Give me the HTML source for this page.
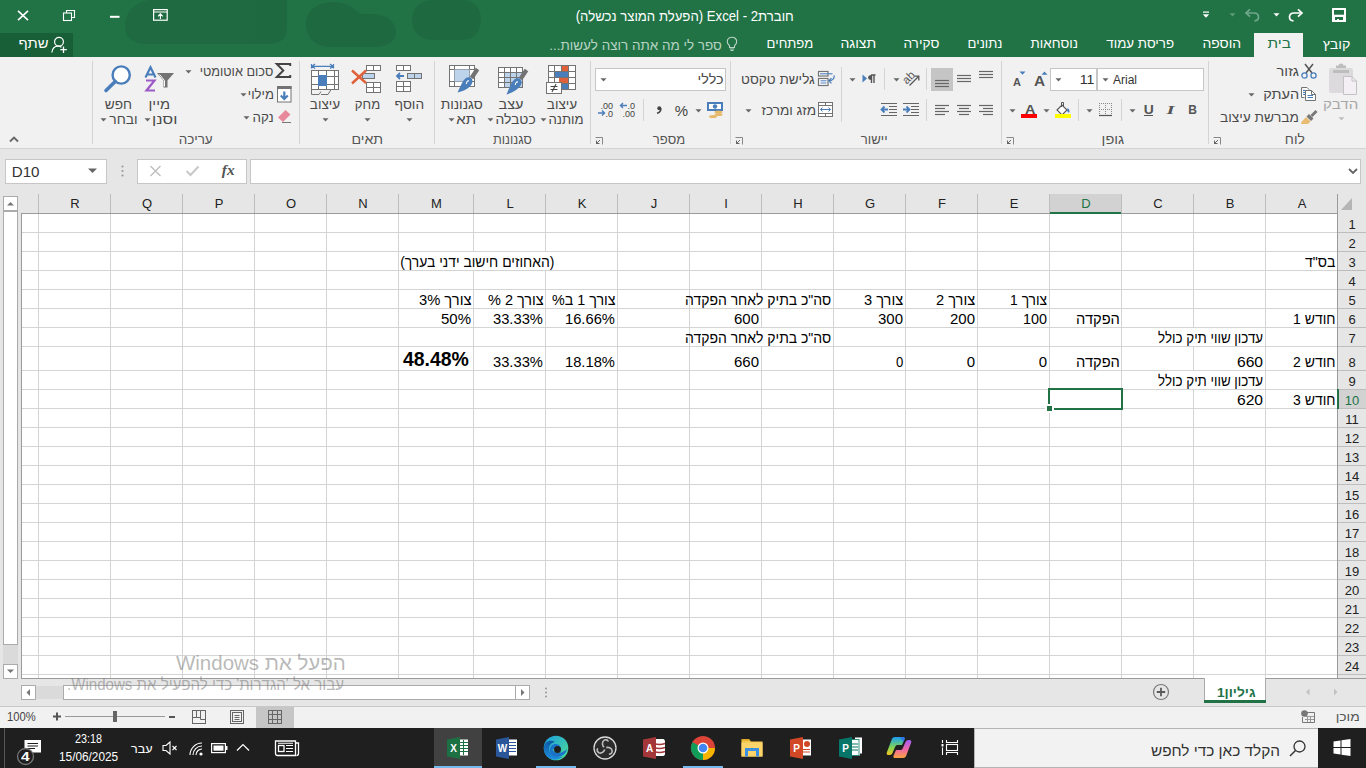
<!DOCTYPE html><html><head><meta charset="utf-8"><style>

*{margin:0;padding:0;box-sizing:border-box}
html,body{width:1366px;height:768px;overflow:hidden;background:#fff}
body{position:relative;font-family:"Liberation Sans",sans-serif;color:#000}
.a{position:absolute}
.ic{position:absolute;overflow:visible;z-index:3}
.t{position:absolute;white-space:nowrap;line-height:1;z-index:4}
.r{direction:rtl}

</style></head><body>
<div class="a" style="left:0;top:0;width:1366px;height:57px;background:#217346"></div>
<div class="a" style="left:0;top:33px;width:73px;height:24px;background:#185e36"></div>
<div class="a" style="left:1254px;top:33px;width:49px;height:24px;background:#f1f1f1"></div>
<div class="a" style="left:0;top:57px;width:1366px;height:92px;background:#f1f1f1;border-bottom:1px solid #d4d4d4"></div>
<div class="a" style="left:92px;top:61px;width:1px;height:83px;background:#d4d4d4"></div>
<div class="a" style="left:299px;top:61px;width:1px;height:83px;background:#d4d4d4"></div>
<div class="a" style="left:434px;top:61px;width:1px;height:83px;background:#d4d4d4"></div>
<div class="a" style="left:590px;top:61px;width:1px;height:83px;background:#d4d4d4"></div>
<div class="a" style="left:730px;top:61px;width:1px;height:83px;background:#d4d4d4"></div>
<div class="a" style="left:1001px;top:61px;width:1px;height:83px;background:#d4d4d4"></div>
<div class="a" style="left:1208px;top:61px;width:1px;height:83px;background:#d4d4d4"></div>
<div class="a" style="left:0;top:149px;width:1366px;height:45px;background:#e6e6e6"></div>
<div class="a" style="left:5px;top:159px;width:102px;height:25px;background:#fff;border:1px solid #c6c6c6"></div>
<div class="a" style="left:137px;top:159px;width:110px;height:25px;background:#fff;border:1px solid #c6c6c6"></div>
<div class="a" style="left:250px;top:159px;width:1111px;height:25px;background:#fff;border:1px solid #c6c6c6"></div>
<div class="a" style="left:0;top:194px;width:1366px;height:485px;background:#e6e6e6"></div>
<div class="a" style="left:1050px;top:194px;width:71px;height:19px;background:#d2d2d2"></div>
<div class="a" style="left:1338px;top:390px;width:28px;height:18px;background:#d2d2d2"></div>
<div class="a" style="left:21px;top:213px;width:1317px;height:466px;background:#fff;border-left:1px solid #9b9b9b;border-top:1px solid #9b9b9b;border-bottom:1px solid #9b9b9b"></div>
<div class="a" style="left:38px;top:194px;width:1px;height:19px;background:#bdbdbd"></div>
<div class="a" style="left:38px;top:214px;width:1px;height:464px;background:#d4d4d4"></div>
<div class="a" style="left:110px;top:194px;width:1px;height:19px;background:#bdbdbd"></div>
<div class="a" style="left:110px;top:214px;width:1px;height:464px;background:#d4d4d4"></div>
<div class="a" style="left:182px;top:194px;width:1px;height:19px;background:#bdbdbd"></div>
<div class="a" style="left:182px;top:214px;width:1px;height:464px;background:#d4d4d4"></div>
<div class="a" style="left:254px;top:194px;width:1px;height:19px;background:#bdbdbd"></div>
<div class="a" style="left:254px;top:214px;width:1px;height:464px;background:#d4d4d4"></div>
<div class="a" style="left:326px;top:194px;width:1px;height:19px;background:#bdbdbd"></div>
<div class="a" style="left:326px;top:214px;width:1px;height:464px;background:#d4d4d4"></div>
<div class="a" style="left:398px;top:194px;width:1px;height:19px;background:#bdbdbd"></div>
<div class="a" style="left:398px;top:214px;width:1px;height:464px;background:#d4d4d4"></div>
<div class="a" style="left:473px;top:194px;width:1px;height:19px;background:#bdbdbd"></div>
<div class="a" style="left:473px;top:214px;width:1px;height:38px;background:#d4d4d4"></div>
<div class="a" style="left:473px;top:271px;width:1px;height:407px;background:#d4d4d4"></div>
<div class="a" style="left:545px;top:194px;width:1px;height:19px;background:#bdbdbd"></div>
<div class="a" style="left:545px;top:214px;width:1px;height:38px;background:#d4d4d4"></div>
<div class="a" style="left:545px;top:271px;width:1px;height:407px;background:#d4d4d4"></div>
<div class="a" style="left:617px;top:194px;width:1px;height:19px;background:#bdbdbd"></div>
<div class="a" style="left:617px;top:214px;width:1px;height:464px;background:#d4d4d4"></div>
<div class="a" style="left:689px;top:194px;width:1px;height:19px;background:#bdbdbd"></div>
<div class="a" style="left:689px;top:214px;width:1px;height:464px;background:#d4d4d4"></div>
<div class="a" style="left:761px;top:194px;width:1px;height:19px;background:#bdbdbd"></div>
<div class="a" style="left:761px;top:214px;width:1px;height:76px;background:#d4d4d4"></div>
<div class="a" style="left:761px;top:309px;width:1px;height:19px;background:#d4d4d4"></div>
<div class="a" style="left:761px;top:347px;width:1px;height:331px;background:#d4d4d4"></div>
<div class="a" style="left:833px;top:194px;width:1px;height:19px;background:#bdbdbd"></div>
<div class="a" style="left:833px;top:214px;width:1px;height:464px;background:#d4d4d4"></div>
<div class="a" style="left:905px;top:194px;width:1px;height:19px;background:#bdbdbd"></div>
<div class="a" style="left:905px;top:214px;width:1px;height:464px;background:#d4d4d4"></div>
<div class="a" style="left:977px;top:194px;width:1px;height:19px;background:#bdbdbd"></div>
<div class="a" style="left:977px;top:214px;width:1px;height:464px;background:#d4d4d4"></div>
<div class="a" style="left:1049px;top:194px;width:1px;height:19px;background:#bdbdbd"></div>
<div class="a" style="left:1049px;top:214px;width:1px;height:464px;background:#d4d4d4"></div>
<div class="a" style="left:1121px;top:194px;width:1px;height:19px;background:#bdbdbd"></div>
<div class="a" style="left:1121px;top:214px;width:1px;height:464px;background:#d4d4d4"></div>
<div class="a" style="left:1193px;top:194px;width:1px;height:19px;background:#bdbdbd"></div>
<div class="a" style="left:1193px;top:214px;width:1px;height:114px;background:#d4d4d4"></div>
<div class="a" style="left:1193px;top:347px;width:1px;height:24px;background:#d4d4d4"></div>
<div class="a" style="left:1193px;top:390px;width:1px;height:288px;background:#d4d4d4"></div>
<div class="a" style="left:1265px;top:194px;width:1px;height:19px;background:#bdbdbd"></div>
<div class="a" style="left:1265px;top:214px;width:1px;height:464px;background:#d4d4d4"></div>
<div class="a" style="left:1337px;top:194px;width:1px;height:484px;background:#9b9b9b"></div>
<div class="a" style="left:1337px;top:678px;width:29px;height:1px;background:#9b9b9b"></div>
<div class="a" style="left:22px;top:232px;width:1315px;height:1px;background:#d4d4d4"></div>
<div class="a" style="left:1338px;top:232px;width:28px;height:1px;background:#bdbdbd"></div>
<div class="a" style="left:22px;top:251px;width:1315px;height:1px;background:#d4d4d4"></div>
<div class="a" style="left:1338px;top:251px;width:28px;height:1px;background:#bdbdbd"></div>
<div class="a" style="left:22px;top:270px;width:1315px;height:1px;background:#d4d4d4"></div>
<div class="a" style="left:1338px;top:270px;width:28px;height:1px;background:#bdbdbd"></div>
<div class="a" style="left:22px;top:289px;width:1315px;height:1px;background:#d4d4d4"></div>
<div class="a" style="left:1338px;top:289px;width:28px;height:1px;background:#bdbdbd"></div>
<div class="a" style="left:22px;top:308px;width:1315px;height:1px;background:#d4d4d4"></div>
<div class="a" style="left:1338px;top:308px;width:28px;height:1px;background:#bdbdbd"></div>
<div class="a" style="left:22px;top:327px;width:1315px;height:1px;background:#d4d4d4"></div>
<div class="a" style="left:1338px;top:327px;width:28px;height:1px;background:#bdbdbd"></div>
<div class="a" style="left:22px;top:346px;width:1315px;height:1px;background:#d4d4d4"></div>
<div class="a" style="left:1338px;top:346px;width:28px;height:1px;background:#bdbdbd"></div>
<div class="a" style="left:22px;top:370px;width:1315px;height:1px;background:#d4d4d4"></div>
<div class="a" style="left:1338px;top:370px;width:28px;height:1px;background:#bdbdbd"></div>
<div class="a" style="left:22px;top:389px;width:1315px;height:1px;background:#d4d4d4"></div>
<div class="a" style="left:1338px;top:389px;width:28px;height:1px;background:#bdbdbd"></div>
<div class="a" style="left:22px;top:408px;width:1315px;height:1px;background:#d4d4d4"></div>
<div class="a" style="left:1338px;top:408px;width:28px;height:1px;background:#bdbdbd"></div>
<div class="a" style="left:22px;top:427px;width:1315px;height:1px;background:#d4d4d4"></div>
<div class="a" style="left:1338px;top:427px;width:28px;height:1px;background:#bdbdbd"></div>
<div class="a" style="left:22px;top:446px;width:1315px;height:1px;background:#d4d4d4"></div>
<div class="a" style="left:1338px;top:446px;width:28px;height:1px;background:#bdbdbd"></div>
<div class="a" style="left:22px;top:465px;width:1315px;height:1px;background:#d4d4d4"></div>
<div class="a" style="left:1338px;top:465px;width:28px;height:1px;background:#bdbdbd"></div>
<div class="a" style="left:22px;top:484px;width:1315px;height:1px;background:#d4d4d4"></div>
<div class="a" style="left:1338px;top:484px;width:28px;height:1px;background:#bdbdbd"></div>
<div class="a" style="left:22px;top:503px;width:1315px;height:1px;background:#d4d4d4"></div>
<div class="a" style="left:1338px;top:503px;width:28px;height:1px;background:#bdbdbd"></div>
<div class="a" style="left:22px;top:522px;width:1315px;height:1px;background:#d4d4d4"></div>
<div class="a" style="left:1338px;top:522px;width:28px;height:1px;background:#bdbdbd"></div>
<div class="a" style="left:22px;top:541px;width:1315px;height:1px;background:#d4d4d4"></div>
<div class="a" style="left:1338px;top:541px;width:28px;height:1px;background:#bdbdbd"></div>
<div class="a" style="left:22px;top:560px;width:1315px;height:1px;background:#d4d4d4"></div>
<div class="a" style="left:1338px;top:560px;width:28px;height:1px;background:#bdbdbd"></div>
<div class="a" style="left:22px;top:579px;width:1315px;height:1px;background:#d4d4d4"></div>
<div class="a" style="left:1338px;top:579px;width:28px;height:1px;background:#bdbdbd"></div>
<div class="a" style="left:22px;top:598px;width:1315px;height:1px;background:#d4d4d4"></div>
<div class="a" style="left:1338px;top:598px;width:28px;height:1px;background:#bdbdbd"></div>
<div class="a" style="left:22px;top:617px;width:1315px;height:1px;background:#d4d4d4"></div>
<div class="a" style="left:1338px;top:617px;width:28px;height:1px;background:#bdbdbd"></div>
<div class="a" style="left:22px;top:636px;width:1315px;height:1px;background:#d4d4d4"></div>
<div class="a" style="left:1338px;top:636px;width:28px;height:1px;background:#bdbdbd"></div>
<div class="a" style="left:22px;top:655px;width:1315px;height:1px;background:#d4d4d4"></div>
<div class="a" style="left:1338px;top:655px;width:28px;height:1px;background:#bdbdbd"></div>
<div class="a" style="left:22px;top:674px;width:1315px;height:1px;background:#d4d4d4"></div>
<div class="a" style="left:1338px;top:674px;width:28px;height:1px;background:#bdbdbd"></div>
<div class="a" style="left:1050px;top:212px;width:71px;height:2px;background:#217346"></div>
<div class="a" style="left:1337px;top:389px;width:2px;height:20px;background:#217346"></div>
<div class="a" style="left:1048px;top:388px;width:75px;height:22px;border:2px solid #217346"></div>
<div class="a" style="left:1045px;top:404px;width:9px;height:9px;background:#fff"></div>
<div class="a" style="left:1047px;top:406px;width:5px;height:5px;background:#217346"></div>
<div class="t r" style="right:572px;top:9px;font-size:14px;color:#fff;transform:scaleX(0.941);transform-origin:100% 50%;">חוברת2 - Excel (הפעלת המוצר נכשלה)</div>
<div class="t r" style="right:16px;top:38px;font-size:13px;color:#fff;transform:scaleX(1.0929);transform-origin:100% 50%;">קובץ</div>
<div class="t r" style="right:125px;top:37px;font-size:13px;color:#fff;transform:scaleX(1.0724);transform-origin:100% 50%;">הוספה</div>
<div class="t r" style="right:192px;top:37px;font-size:13px;color:#fff;transform:scaleX(1.0251);transform-origin:100% 50%;">פריסת עמוד</div>
<div class="t r" style="right:288px;top:37px;font-size:13px;color:#fff;transform:scaleX(1.0309);transform-origin:100% 50%;">נוסחאות</div>
<div class="t r" style="right:364px;top:37px;font-size:13px;color:#fff;transform:scaleX(1.0116);transform-origin:100% 50%;">נתונים</div>
<div class="t r" style="right:427px;top:37px;font-size:13px;color:#fff;transform:scaleX(1.047);transform-origin:100% 50%;">סקירה</div>
<div class="t r" style="right:490px;top:37px;font-size:13px;color:#fff;transform:scaleX(1.0773);transform-origin:100% 50%;">תצוגה</div>
<div class="t r" style="right:553px;top:37px;font-size:13px;color:#fff;transform:scaleX(1.0086);transform-origin:100% 50%;">מפתחים</div>
<div class="t r" style="right:75px;top:37px;font-size:13px;color:#217346;transform:scaleX(1.1756);transform-origin:100% 50%;">בית</div>
<div class="t r" style="right:644px;top:39px;font-size:13px;color:#b9d3c4;transform:scaleX(1.0343);transform-origin:100% 50%;">ספר לי מה אתה רוצה לעשות...</div>
<div class="t r" style="right:1317px;top:37px;font-size:13px;color:#fff;transform:scaleX(1.1342);transform-origin:100% 50%;">שתף</div>
<div class="t r" style="right:1153px;top:133px;font-size:13px;color:#555;transform:scaleX(1.0363);transform-origin:100% 50%;">עריכה</div>
<div class="t r" style="right:983px;top:133px;font-size:13px;color:#555;transform:scaleX(1.0887);transform-origin:100% 50%;">תאים</div>
<div class="t r" style="right:834px;top:133px;font-size:13px;color:#555;transform:scaleX(0.9776);transform-origin:100% 50%;">סגנונות</div>
<div class="t r" style="right:681px;top:133px;font-size:13px;color:#555;transform:scaleX(1.0042);transform-origin:100% 50%;">מספר</div>
<div class="t r" style="right:478px;top:133px;font-size:13px;color:#555;transform:scaleX(1.0108);transform-origin:100% 50%;">יישור</div>
<div class="t r" style="right:242px;top:133px;font-size:13px;color:#555;transform:scaleX(1.1185);transform-origin:100% 50%;">גופן</div>
<div class="t r" style="right:61px;top:133px;font-size:13px;color:#555;transform:scaleX(1.0658);transform-origin:100% 50%;">לוח</div>
<div class="a" style="left:39px;width:72px;text-align:center;top:197px;font-size:13px;line-height:13px;color:#222">R</div>
<div class="a" style="left:111px;width:72px;text-align:center;top:197px;font-size:13px;line-height:13px;color:#222">Q</div>
<div class="a" style="left:183px;width:72px;text-align:center;top:197px;font-size:13px;line-height:13px;color:#222">P</div>
<div class="a" style="left:255px;width:72px;text-align:center;top:197px;font-size:13px;line-height:13px;color:#222">O</div>
<div class="a" style="left:327px;width:72px;text-align:center;top:197px;font-size:13px;line-height:13px;color:#222">N</div>
<div class="a" style="left:399px;width:75px;text-align:center;top:197px;font-size:13px;line-height:13px;color:#222">M</div>
<div class="a" style="left:474px;width:72px;text-align:center;top:197px;font-size:13px;line-height:13px;color:#222">L</div>
<div class="a" style="left:546px;width:72px;text-align:center;top:197px;font-size:13px;line-height:13px;color:#222">K</div>
<div class="a" style="left:618px;width:72px;text-align:center;top:197px;font-size:13px;line-height:13px;color:#222">J</div>
<div class="a" style="left:690px;width:72px;text-align:center;top:197px;font-size:13px;line-height:13px;color:#222">I</div>
<div class="a" style="left:762px;width:72px;text-align:center;top:197px;font-size:13px;line-height:13px;color:#222">H</div>
<div class="a" style="left:834px;width:72px;text-align:center;top:197px;font-size:13px;line-height:13px;color:#222">G</div>
<div class="a" style="left:906px;width:72px;text-align:center;top:197px;font-size:13px;line-height:13px;color:#222">F</div>
<div class="a" style="left:978px;width:72px;text-align:center;top:197px;font-size:13px;line-height:13px;color:#222">E</div>
<div class="a" style="left:1050px;width:72px;text-align:center;top:197px;font-size:13px;line-height:13px;color:#217346">D</div>
<div class="a" style="left:1122px;width:72px;text-align:center;top:197px;font-size:13px;line-height:13px;color:#222">C</div>
<div class="a" style="left:1194px;width:72px;text-align:center;top:197px;font-size:13px;line-height:13px;color:#222">B</div>
<div class="a" style="left:1266px;width:72px;text-align:center;top:197px;font-size:13px;line-height:13px;color:#222">A</div>
<div class="a" style="left:1338px;width:28px;text-align:center;top:218px;font-size:13px;line-height:13px;color:#222">1</div>
<div class="a" style="left:1338px;width:28px;text-align:center;top:237px;font-size:13px;line-height:13px;color:#222">2</div>
<div class="a" style="left:1338px;width:28px;text-align:center;top:256px;font-size:13px;line-height:13px;color:#222">3</div>
<div class="a" style="left:1338px;width:28px;text-align:center;top:275px;font-size:13px;line-height:13px;color:#222">4</div>
<div class="a" style="left:1338px;width:28px;text-align:center;top:294px;font-size:13px;line-height:13px;color:#222">5</div>
<div class="a" style="left:1338px;width:28px;text-align:center;top:313px;font-size:13px;line-height:13px;color:#222">6</div>
<div class="a" style="left:1338px;width:28px;text-align:center;top:332px;font-size:13px;line-height:13px;color:#222">7</div>
<div class="a" style="left:1338px;width:28px;text-align:center;top:356px;font-size:13px;line-height:13px;color:#222">8</div>
<div class="a" style="left:1338px;width:28px;text-align:center;top:375px;font-size:13px;line-height:13px;color:#222">9</div>
<div class="a" style="left:1338px;width:28px;text-align:center;top:394px;font-size:13px;line-height:13px;color:#217346">10</div>
<div class="a" style="left:1338px;width:28px;text-align:center;top:413px;font-size:13px;line-height:13px;color:#222">11</div>
<div class="a" style="left:1338px;width:28px;text-align:center;top:432px;font-size:13px;line-height:13px;color:#222">12</div>
<div class="a" style="left:1338px;width:28px;text-align:center;top:451px;font-size:13px;line-height:13px;color:#222">13</div>
<div class="a" style="left:1338px;width:28px;text-align:center;top:470px;font-size:13px;line-height:13px;color:#222">14</div>
<div class="a" style="left:1338px;width:28px;text-align:center;top:489px;font-size:13px;line-height:13px;color:#222">15</div>
<div class="a" style="left:1338px;width:28px;text-align:center;top:508px;font-size:13px;line-height:13px;color:#222">16</div>
<div class="a" style="left:1338px;width:28px;text-align:center;top:527px;font-size:13px;line-height:13px;color:#222">17</div>
<div class="a" style="left:1338px;width:28px;text-align:center;top:546px;font-size:13px;line-height:13px;color:#222">18</div>
<div class="a" style="left:1338px;width:28px;text-align:center;top:565px;font-size:13px;line-height:13px;color:#222">19</div>
<div class="a" style="left:1338px;width:28px;text-align:center;top:584px;font-size:13px;line-height:13px;color:#222">20</div>
<div class="a" style="left:1338px;width:28px;text-align:center;top:603px;font-size:13px;line-height:13px;color:#222">21</div>
<div class="a" style="left:1338px;width:28px;text-align:center;top:622px;font-size:13px;line-height:13px;color:#222">22</div>
<div class="a" style="left:1338px;width:28px;text-align:center;top:641px;font-size:13px;line-height:13px;color:#222">23</div>
<div class="a" style="left:1338px;width:28px;text-align:center;top:660px;font-size:13px;line-height:13px;color:#222">24</div>
<div class="t r" style="right:31px;top:254px;font-size:15px;color:#000;transform:scaleX(0.9375);transform-origin:100% 50%;">בס"ד</div>
<div class="t r" style="right:812px;top:254px;font-size:15px;color:#000;transform:scaleX(0.9268);transform-origin:100% 50%;">(האחוזים חישוב ידני בערך)</div>
<div class="t r" style="right:319px;top:292px;font-size:15px;color:#000;transform:scaleX(0.9231);transform-origin:100% 50%;">צורך 1</div>
<div class="t r" style="right:391px;top:292px;font-size:15px;color:#000;transform:scaleX(0.9757);transform-origin:100% 50%;">צורך 2</div>
<div class="t r" style="right:463px;top:292px;font-size:15px;color:#000;transform:scaleX(0.9757);transform-origin:100% 50%;">צורך 3</div>
<div class="t r" style="right:535px;top:292px;font-size:15px;color:#000;transform:scaleX(0.9295);transform-origin:100% 50%;">סה"כ בתיק לאחר הפקדה</div>
<div class="t r" style="right:750px;top:292px;font-size:15px;color:#000;transform:scaleX(0.9545);transform-origin:100% 50%;">צורך 1 ב%</div>
<div class="t r" style="right:822px;top:292px;font-size:15px;color:#000;transform:scaleX(0.9649);transform-origin:100% 50%;">צורך 2 %</div>
<div class="t r" style="right:894px;top:292px;font-size:15px;color:#000;transform:scaleX(0.9815);transform-origin:100% 50%;">צורך 3%</div>
<div class="t r" style="right:30px;top:311px;font-size:15px;color:#000;transform:scaleX(0.9318);transform-origin:100% 50%;">חודש 1</div>
<div class="t r" style="right:246px;top:311px;font-size:15px;color:#000;transform:scaleX(0.9767);transform-origin:100% 50%;">הפקדה</div>
<div class="t" style="right:319px;top:311px;font-size:15px;color:#000;transform:scaleX(0.9583);transform-origin:100% 50%;">100</div>
<div class="t" style="right:391px;top:311px;font-size:15px;color:#000;">200</div>
<div class="t" style="right:463px;top:311px;font-size:15px;color:#000;">300</div>
<div class="t" style="right:607px;top:311px;font-size:15px;color:#000;">600</div>
<div class="t" style="right:751px;top:311px;font-size:15px;color:#000;transform:scaleX(0.98);transform-origin:100% 50%;">16.66%</div>
<div class="t" style="right:823px;top:311px;font-size:15px;color:#000;transform:scaleX(0.98);transform-origin:100% 50%;">33.33%</div>
<div class="t" style="right:895px;top:311px;font-size:15px;color:#000;">50%</div>
<div class="t r" style="right:103px;top:330px;font-size:15px;color:#000;transform:scaleX(0.8889);transform-origin:100% 50%;">עדכון שווי תיק כולל</div>
<div class="t r" style="right:535px;top:330px;font-size:15px;color:#000;transform:scaleX(0.9295);transform-origin:100% 50%;">סה"כ בתיק לאחר הפקדה</div>
<div class="t r" style="right:30px;top:354px;font-size:15px;color:#000;transform:scaleX(0.9318);transform-origin:100% 50%;">חודש 2</div>
<div class="t" style="right:103px;top:354px;font-size:15px;color:#000;transform:scaleX(1.0417);transform-origin:100% 50%;">660</div>
<div class="t r" style="right:246px;top:354px;font-size:15px;color:#000;transform:scaleX(0.9767);transform-origin:100% 50%;">הפקדה</div>
<div class="t" style="right:319px;top:354px;font-size:15px;color:#000;">0</div>
<div class="t" style="right:391px;top:354px;font-size:15px;color:#000;">0</div>
<div class="t" style="right:463px;top:354px;font-size:15px;color:#000;transform:scaleX(0.875);transform-origin:100% 50%;">0</div>
<div class="t" style="right:607px;top:354px;font-size:15px;color:#000;">660</div>
<div class="t" style="right:751px;top:354px;font-size:15px;color:#000;transform:scaleX(0.98);transform-origin:100% 50%;">18.18%</div>
<div class="t" style="right:823px;top:354px;font-size:15px;color:#000;transform:scaleX(0.98);transform-origin:100% 50%;">33.33%</div>
<div class="t" style="right:897px;top:349px;font-size:20px;color:#000;font-weight:bold;transform:scaleX(0.9723);transform-origin:100% 50%;">48.48%</div>
<div class="t r" style="right:103px;top:373px;font-size:15px;color:#000;transform:scaleX(0.8889);transform-origin:100% 50%;">עדכון שווי תיק כולל</div>
<div class="t r" style="right:30px;top:392px;font-size:15px;color:#000;transform:scaleX(0.9318);transform-origin:100% 50%;">חודש 3</div>
<div class="t" style="right:103px;top:392px;font-size:15px;color:#000;transform:scaleX(1.0417);transform-origin:100% 50%;">620</div>
<div class="a" style="left:3px;top:196px;width:15px;height:15px;background:#fff;border:1px solid #ababab"></div>
<svg class="ic" style="left:3px;top:196px" width="15" height="15"><path d="M4 9.5 L7.5 6 L11 9.5Z" fill="#777"/></svg>
<div class="a" style="left:3px;top:211px;width:15px;height:434px;background:#fff;border:1px solid #ababab"></div>
<div class="a" style="left:3px;top:645px;width:15px;height:19px;background:#dadada"></div>
<div class="a" style="left:3px;top:664px;width:15px;height:15px;background:#fff;border:1px solid #ababab"></div>
<svg class="ic" style="left:3px;top:664px" width="15" height="15"><path d="M4 5.5 L7.5 9 L11 5.5Z" fill="#777"/></svg>
<div class="a" style="left:0;top:679px;width:1366px;height:27px;background:#e6e6e6"></div>
<div class="a" style="left:21px;top:685px;width:15px;height:15px;background:#fff;border:1px solid #ababab"></div>
<svg class="ic" style="left:21px;top:685px" width="15" height="15"><path d="M9 4 L5.5 7.5 L9 11Z" fill="#777"/></svg>
<div class="a" style="left:36px;top:686px;width:27px;height:13px;background:#dadada"></div>
<div class="a" style="left:63px;top:685px;width:453px;height:15px;background:#fff;border:1px solid #ababab"></div>
<div class="a" style="left:515px;top:685px;width:15px;height:15px;background:#fff;border:1px solid #ababab"></div>
<svg class="ic" style="left:515px;top:685px" width="15" height="15"><path d="M6 4 L9.5 7.5 L6 11Z" fill="#777"/></svg>
<svg class="ic" style="left:544px;top:686px" width="5" height="14"><circle cx="2" cy="2.5" r="1" fill="#999"/><circle cx="2" cy="6.5" r="1" fill="#999"/><circle cx="2" cy="10.5" r="1" fill="#999"/></svg>
<div class="a" style="left:1204px;top:678px;width:62px;height:25px;background:#fff;border-left:1px solid #ababab;border-right:1px solid #ababab"></div>
<div class="a" style="left:1204px;top:700px;width:62px;height:3px;background:#217346"></div>
<svg class="ic" style="left:1150px;top:681px" width="22" height="22"><circle cx="11" cy="11" r="7.5" fill="none" stroke="#7a7a7a" stroke-width="1.2"/><path d="M11 6.8V15.2M6.8 11H15.2" stroke="#5a5a5a" stroke-width="1.8"/></svg>
<svg class="ic" style="left:1300px;top:684px" width="44" height="16"><path d="M9.5 4.5 L6 8 L9.5 11.5Z" fill="#c2c2c2"/><path d="M34 4.5 L37.5 8 L34 11.5Z" fill="#c2c2c2"/></svg>
<div class="t r" style="right:110px;top:686px;font-size:13px;color:#217346;font-weight:bold;transform:scaleX(1.0564);transform-origin:100% 50%;">גיליון1</div>
<div class="a" style="left:0;top:706px;width:1366px;height:22px;background:#f1f1f1;border-top:1px solid #c8c8c8"></div>
<div class="a" style="left:256px;top:707px;width:38px;height:21px;background:#c6c6c6"></div>
<div class="t" style="right:1330px;top:711px;font-size:12px;color:#444;transform:scaleX(0.9333);transform-origin:100% 50%;">100%</div>
<svg class="ic" style="left:50px;top:708px" width="130" height="18"><path d="M3 8.5H11M7 4.5V12.5" stroke="#555" stroke-width="2"/><path d="M15 8.5H115" stroke="#9a9a9a" stroke-width="1"/><rect x="63" y="3" width="4" height="11" fill="#666"/><path d="M119 9H125" stroke="#555" stroke-width="2"/></svg>
<svg class="ic" style="left:192px;top:710px" width="14" height="14"><rect x="0.5" y="0.5" width="13" height="13" fill="none" stroke="#666"/><path d="M4.5 0.5V7.5M8.5 0.5V9.5H13.5M0.5 7.5H8.5" fill="none" stroke="#666"/></svg>
<svg class="ic" style="left:230px;top:710px" width="14" height="14"><rect x="0.5" y="0.5" width="13" height="13" fill="none" stroke="#666"/><rect x="2.5" y="2.5" width="9" height="9" fill="none" stroke="#666"/><path d="M4.5 5.5H9.5M4.5 7.5H9.5M4.5 9.5H9.5" stroke="#666"/></svg>
<svg class="ic" style="left:268px;top:710px" width="14" height="14"><rect x="0.5" y="0.5" width="13" height="13" fill="none" stroke="#666"/><path d="M4.5 0.5V13.5M9.5 0.5V13.5M0.5 4.5H13.5M0.5 9.5H13.5" stroke="#666"/></svg>
<div class="t r" style="right:6px;top:711px;font-size:12px;color:#555;transform:scaleX(1.1579);transform-origin:100% 50%;">מוכן</div>
<svg class="ic" style="left:1301px;top:710px" width="14" height="13"><circle cx="3.5" cy="3.5" r="3.3" fill="#777"/><path d="M5 2.5H13.5V12.5H1.5V7" fill="none" stroke="#777"/><path d="M4 6.5H13M4 9.5H13M6.5 6V12M9.5 6V12" stroke="#999"/></svg>
<div class="a" style="left:0;top:728px;width:1366px;height:40px;background:#1f1f20"></div>
<div class="a" style="left:4px;top:728px;width:1px;height:40px;background:#555"></div>
<div class="a" style="left:434px;top:728px;width:48px;height:40px;background:#414141"></div>
<div class="a" style="left:434px;top:766px;width:48px;height:2px;background:#76b9ed"></div>
<div class="a" style="left:536px;top:766px;width:40px;height:2px;background:#76b9ed"></div>
<div class="a" style="left:683px;top:766px;width:40px;height:2px;background:#76b9ed"></div>
<div class="a" style="left:974px;top:728px;width:344px;height:40px;background:#f2f2f2;border:1px solid #b4b4b4;border-right:none"></div>
<div class="t" style="right:1264px;top:733px;font-size:12px;color:#fff;transform:scaleX(0.9);transform-origin:100% 50%;">23:18</div>
<div class="t" style="right:1248px;top:751px;font-size:12px;color:#fff;transform:scaleX(0.9831);transform-origin:100% 50%;">15/06/2025</div>
<div class="t r" style="right:1213px;top:743px;font-size:12px;color:#fff;transform:scaleX(1.05);transform-origin:100% 50%;">עבר</div>
<div class="t r" style="right:86px;top:743px;font-size:15px;color:#333;transform:scaleX(1.024);transform-origin:100% 50%;">הקלד כאן כדי לחפש</div>
<div class="t r" style="right:1234px;top:98px;font-size:13px;color:#4a4a4a;transform:scaleX(1.0497);transform-origin:100% 50%;">חפש</div>
<div class="t r" style="right:1228px;top:113px;font-size:13px;color:#4a4a4a;transform:scaleX(1.0617);transform-origin:100% 50%;">ובחר</div>
<div class="t r" style="right:1196px;top:98px;font-size:13px;color:#4a4a4a;transform:scaleX(1.1281);transform-origin:100% 50%;">מיין</div>
<div class="t r" style="right:1189px;top:113px;font-size:13px;color:#4a4a4a;transform:scaleX(1.247);transform-origin:100% 50%;">וסנן</div>
<div class="t r" style="right:1093px;top:65px;font-size:13px;color:#4a4a4a;transform:scaleX(0.9774);transform-origin:100% 50%;">סכום אוטומטי</div>
<div class="t r" style="right:1092px;top:88px;font-size:13px;color:#4a4a4a;transform:scaleX(1.007);transform-origin:100% 50%;">מילוי</div>
<div class="t r" style="right:1092px;top:111px;font-size:13px;color:#4a4a4a;transform:scaleX(1.0257);transform-origin:100% 50%;">נקה</div>
<div class="t r" style="right:1026px;top:98px;font-size:13px;color:#4a4a4a;transform:scaleX(1.0417);transform-origin:100% 50%;">עיצוב</div>
<div class="t r" style="right:986px;top:98px;font-size:13px;color:#4a4a4a;transform:scaleX(1.0087);transform-origin:100% 50%;">מחק</div>
<div class="t r" style="right:942px;top:98px;font-size:13px;color:#4a4a4a;transform:scaleX(1.0538);transform-origin:100% 50%;">הוסף</div>
<div class="t r" style="right:883px;top:98px;font-size:13px;color:#4a4a4a;transform:scaleX(1.0584);transform-origin:100% 50%;">סגנונות</div>
<div class="t r" style="right:890px;top:113px;font-size:13px;color:#4a4a4a;transform:scaleX(1.1539);transform-origin:100% 50%;">תא</div>
<div class="t r" style="right:843px;top:98px;font-size:13px;color:#4a4a4a;transform:scaleX(1.1077);transform-origin:100% 50%;">עצב</div>
<div class="t r" style="right:830px;top:113px;font-size:13px;color:#4a4a4a;transform:scaleX(1.0678);transform-origin:100% 50%;">כטבלה</div>
<div class="t r" style="right:789px;top:98px;font-size:13px;color:#4a4a4a;transform:scaleX(1.0417);transform-origin:100% 50%;">עיצוב</div>
<div class="t r" style="right:782px;top:113px;font-size:13px;color:#4a4a4a;transform:scaleX(1.014);transform-origin:100% 50%;">מותנה</div>
<div class="t r" style="right:642px;top:73px;font-size:13px;color:#4a4a4a;transform:scaleX(1.1009);transform-origin:100% 50%;">כללי</div>
<div class="t r" style="right:551px;top:73px;font-size:13px;color:#4a4a4a;transform:scaleX(1.0408);transform-origin:100% 50%;">גלישת טקסט</div>
<div class="t r" style="right:550px;top:104px;font-size:13px;color:#4a4a4a;transform:scaleX(1.0486);transform-origin:100% 50%;">מזג ומרכז</div>
<div class="t r" style="right:67px;top:65px;font-size:13px;color:#4a4a4a;transform:scaleX(1.1204);transform-origin:100% 50%;">גזור</div>
<div class="t r" style="right:67px;top:88px;font-size:13px;color:#4a4a4a;transform:scaleX(1.1141);transform-origin:100% 50%;">העתק</div>
<div class="t r" style="right:67px;top:111px;font-size:13px;color:#4a4a4a;transform:scaleX(1.0526);transform-origin:100% 50%;">מברשת עיצוב</div>
<div class="t r" style="right:8px;top:98px;font-size:13px;color:#a6a6a6;transform:scaleX(1.1615);transform-origin:100% 50%;">הדבק</div>
<div class="t" style="right:229px;top:74px;font-size:12px;color:#333;">Arial</div>
<div class="t" style="right:272px;top:74px;font-size:12px;color:#333;transform:scaleX(1.1736);transform-origin:100% 50%;">11</div>
<div class="a" style="left:595px;top:68px;width:131px;height:23px;background:#fff;border:1px solid #c6c6c6"></div>
<div class="a" style="left:1050px;top:68px;width:47px;height:23px;background:#fff;border:1px solid #c6c6c6"></div>
<div class="a" style="left:1097px;top:68px;width:107px;height:23px;background:#fff;border:1px solid #c6c6c6"></div>
<svg class="ic" style="left:185px;top:70px" width="7" height="4" viewBox="0 0 7 4"><path d="M0.5 0.2H6.5L3.5 3.6Z" fill="#666"/></svg>
<svg class="ic" style="left:240px;top:93px" width="7" height="4" viewBox="0 0 7 4"><path d="M0.5 0.2H6.5L3.5 3.6Z" fill="#666"/></svg>
<svg class="ic" style="left:243px;top:116px" width="7" height="4" viewBox="0 0 7 4"><path d="M0.5 0.2H6.5L3.5 3.6Z" fill="#666"/></svg>
<svg class="ic" style="left:100px;top:118px" width="7" height="4" viewBox="0 0 7 4"><path d="M0.5 0.2H6.5L3.5 3.6Z" fill="#666"/></svg>
<svg class="ic" style="left:144px;top:118px" width="7" height="4" viewBox="0 0 7 4"><path d="M0.5 0.2H6.5L3.5 3.6Z" fill="#666"/></svg>
<svg class="ic" style="left:322px;top:118px" width="7" height="4" viewBox="0 0 7 4"><path d="M0.5 0.2H6.5L3.5 3.6Z" fill="#666"/></svg>
<svg class="ic" style="left:364px;top:118px" width="7" height="4" viewBox="0 0 7 4"><path d="M0.5 0.2H6.5L3.5 3.6Z" fill="#666"/></svg>
<svg class="ic" style="left:406px;top:118px" width="7" height="4" viewBox="0 0 7 4"><path d="M0.5 0.2H6.5L3.5 3.6Z" fill="#666"/></svg>
<svg class="ic" style="left:448px;top:118px" width="7" height="4" viewBox="0 0 7 4"><path d="M0.5 0.2H6.5L3.5 3.6Z" fill="#666"/></svg>
<svg class="ic" style="left:487px;top:118px" width="7" height="4" viewBox="0 0 7 4"><path d="M0.5 0.2H6.5L3.5 3.6Z" fill="#666"/></svg>
<svg class="ic" style="left:540px;top:118px" width="7" height="4" viewBox="0 0 7 4"><path d="M0.5 0.2H6.5L3.5 3.6Z" fill="#666"/></svg>
<svg class="ic" style="left:600px;top:78px" width="7" height="4" viewBox="0 0 7 4"><path d="M0.5 0.2H6.5L3.5 3.6Z" fill="#666"/></svg>
<svg class="ic" style="left:695px;top:109px" width="7" height="4" viewBox="0 0 7 4"><path d="M0.5 0.2H6.5L3.5 3.6Z" fill="#666"/></svg>
<svg class="ic" style="left:745px;top:109px" width="7" height="4" viewBox="0 0 7 4"><path d="M0.5 0.2H6.5L3.5 3.6Z" fill="#666"/></svg>
<svg class="ic" style="left:849px;top:78px" width="7" height="4" viewBox="0 0 7 4"><path d="M0.5 0.2H6.5L3.5 3.6Z" fill="#666"/></svg>
<svg class="ic" style="left:893px;top:78px" width="7" height="4" viewBox="0 0 7 4"><path d="M0.5 0.2H6.5L3.5 3.6Z" fill="#666"/></svg>
<svg class="ic" style="left:1009px;top:109px" width="7" height="4" viewBox="0 0 7 4"><path d="M0.5 0.2H6.5L3.5 3.6Z" fill="#666"/></svg>
<svg class="ic" style="left:1043px;top:109px" width="7" height="4" viewBox="0 0 7 4"><path d="M0.5 0.2H6.5L3.5 3.6Z" fill="#666"/></svg>
<svg class="ic" style="left:1086px;top:109px" width="7" height="4" viewBox="0 0 7 4"><path d="M0.5 0.2H6.5L3.5 3.6Z" fill="#666"/></svg>
<svg class="ic" style="left:1129px;top:109px" width="7" height="4" viewBox="0 0 7 4"><path d="M0.5 0.2H6.5L3.5 3.6Z" fill="#666"/></svg>
<svg class="ic" style="left:1055px;top:78px" width="7" height="4" viewBox="0 0 7 4"><path d="M0.5 0.2H6.5L3.5 3.6Z" fill="#666"/></svg>
<svg class="ic" style="left:1102px;top:78px" width="7" height="4" viewBox="0 0 7 4"><path d="M0.5 0.2H6.5L3.5 3.6Z" fill="#666"/></svg>
<svg class="ic" style="left:1248px;top:93px" width="7" height="4" viewBox="0 0 7 4"><path d="M0.5 0.2H6.5L3.5 3.6Z" fill="#666"/></svg>
<svg class="ic" style="left:1338px;top:117px" width="7" height="4" viewBox="0 0 7 4"><path d="M0.5 0.2H6.5L3.5 3.6Z" fill="#bdbdbd"/></svg>
<div class="a" style="left:643px;top:99px;width:1px;height:22px;background:#d4d4d4"></div>
<div class="a" style="left:841px;top:67px;width:1px;height:55px;background:#d4d4d4"></div>
<div class="a" style="left:884px;top:68px;width:1px;height:22px;background:#d4d4d4"></div>
<div class="a" style="left:926px;top:68px;width:1px;height:22px;background:#d4d4d4"></div>
<div class="a" style="left:926px;top:99px;width:1px;height:22px;background:#d4d4d4"></div>
<div class="a" style="left:1078px;top:99px;width:1px;height:22px;background:#d4d4d4"></div>
<div class="a" style="left:1121px;top:99px;width:1px;height:22px;background:#d4d4d4"></div>
<svg class="ic" style="left:595px;top:137px" width="8" height="8" viewBox="0 0 8 8"><path d="M0.5 0.5H7.5V7.5" fill="none" stroke="#888"/><path d="M1 7L5 3M1.5 3.5V6.5H4.5" fill="none" stroke="#666"/></svg>
<svg class="ic" style="left:735px;top:137px" width="8" height="8" viewBox="0 0 8 8"><path d="M0.5 0.5H7.5V7.5" fill="none" stroke="#888"/><path d="M1 7L5 3M1.5 3.5V6.5H4.5" fill="none" stroke="#666"/></svg>
<svg class="ic" style="left:1006px;top:137px" width="8" height="8" viewBox="0 0 8 8"><path d="M0.5 0.5H7.5V7.5" fill="none" stroke="#888"/><path d="M1 7L5 3M1.5 3.5V6.5H4.5" fill="none" stroke="#666"/></svg>
<svg class="ic" style="left:1213px;top:137px" width="8" height="8" viewBox="0 0 8 8"><path d="M0.5 0.5H7.5V7.5" fill="none" stroke="#888"/><path d="M1 7L5 3M1.5 3.5V6.5H4.5" fill="none" stroke="#666"/></svg>
<svg class="ic" style="left:9px;top:136px" width="10" height="7" viewBox="0 0 10 7"><path d="M1 5.5L5 1.5L9 5.5" fill="none" stroke="#666" stroke-width="1.8"/></svg>
<svg class="ic" style="left:103px;top:64px" width="30" height="30" viewBox="0 0 30 30"><circle cx="18.2" cy="11" r="8.6" fill="#fff" stroke="#4a7ebb" stroke-width="2.4"/><path d="M12.2 17.5L3 26.5" stroke="#4a7ebb" stroke-width="3.6" stroke-linecap="round"/></svg>
<svg class="ic" style="left:144px;top:65px" width="32" height="29" viewBox="0 0 32 29"><path d="M1.5 12.5L6.5 2.2L11.5 12.5M3.3 9.5H9.7" fill="none" stroke="#4a7ebb" stroke-width="2.2"/><path d="M2 15.5H10.5L2.5 25.5H11" fill="none" stroke="#9c5ac6" stroke-width="2.2"/><path d="M13 8H30L23.5 15.5V22.5H19.5V15.5Z" fill="#737373"/><path d="M15.5 9.5L20.5 15.5V21.5" fill="none" stroke="#fff" stroke-width="1"/></svg>
<svg class="ic" style="left:275px;top:62px" width="17" height="17" viewBox="0 0 17 17"><path d="M15.2 4V2H1.8L8.3 8.5L1.8 15H15.2V13" fill="none" stroke="#444" stroke-width="2" stroke-linejoin="miter"/></svg>
<svg class="ic" style="left:276px;top:85px" width="16" height="18" viewBox="0 0 16 18"><rect x="1.5" y="1.5" width="13.5" height="15.5" fill="#fff" stroke="#737373"/><rect x="1" y="1" width="14.5" height="3" fill="#737373"/><path d="M8.3 6.5V14M4.8 10.5L8.3 14L11.8 10.5" fill="none" stroke="#4a7ebb" stroke-width="2.2"/></svg>
<svg class="ic" style="left:276px;top:109px" width="16" height="15" viewBox="0 0 16 15"><path d="M9.5 1L14.5 5.5L7 13L2 8.5Z" fill="#e8899b"/><path d="M6 13.5H15" stroke="#777" stroke-width="1"/></svg>
<svg class="ic" style="left:310px;top:63px" width="30" height="33" viewBox="0 0 30 33"><path d="M1.5 1V5.5M23.5 1V5.5M2 3.3H23M5 1L2 3.3L5 5.6M20 1L23 3.3L20 5.6" fill="none" stroke="#4a7ebb" stroke-width="1.2"/><rect x="1.5" y="7.5" width="27" height="19" fill="#fff" stroke="#737373"/><path d="M8.5 7.5V26.5M16.5 7.5V26.5M24.5 7.5V26.5M1.5 13.5H28.5M1.5 21.5H28.5" stroke="#737373"/><rect x="8" y="12" width="9" height="11" fill="#4a7ebb"/><path d="M1.5 26.5V31.5H9L11 28.5M11 31.5H18L21 26.5" fill="none" stroke="#737373"/></svg>
<svg class="ic" style="left:350px;top:64px" width="33" height="30" viewBox="0 0 33 30"><rect x="16.5" y="1.5" width="14" height="5" fill="#fff" stroke="#737373"/><path d="M23.5 1.5V6.5" stroke="#737373"/><rect x="12.5" y="9.5" width="12" height="5" fill="#bcd3eb" stroke="#737373"/><rect x="16.5" y="18.5" width="14" height="10" fill="#fff" stroke="#737373"/><path d="M23.5 18.5V28.5M16.5 23.5H30.5" stroke="#737373"/><path d="M2 6.5L16 19M2 19.5L16 6.5" stroke="#e0603a" stroke-width="2.4"/></svg>
<svg class="ic" style="left:395px;top:64px" width="28" height="30" viewBox="0 0 28 30"><rect x="1.5" y="1.5" width="14" height="5" fill="#fff" stroke="#737373"/><path d="M8.5 1.5V6.5" stroke="#737373"/><rect x="12.5" y="9.5" width="14" height="5" fill="#bcd3eb" stroke="#737373"/><path d="M19.5 9.5V14.5" stroke="#737373"/><path d="M2.5 12H9M5 9L2 12L5 15" fill="none" stroke="#4a7ebb" stroke-width="1.8"/><rect x="1.5" y="17.5" width="14" height="10" fill="#fff" stroke="#737373"/><path d="M8.5 17.5V27.5M1.5 22.5H15.5" stroke="#737373"/></svg>
<svg class="ic" style="left:448px;top:64px" width="32" height="31" viewBox="0 0 32 31"><rect x="1.5" y="1.5" width="25" height="21" fill="#fff" stroke="#737373"/><path d="M6.5 1.5V22.5M21.5 1.5V22.5M1.5 5.5H26.5M1.5 17.5H26.5" stroke="#737373"/><rect x="6.5" y="5.5" width="15" height="12" fill="#bcd3eb"/><path d="M29.5 5L23.5 14" stroke="#737373" stroke-width="4.2"/><path d="M22.5 13.5C25.5 15.5 25 19.5 22 22.5C19 25.5 14.5 27.5 9.5 28.5C11.5 24.5 13.5 19.5 15.5 16.5C17.5 13.5 20 12.5 22.5 13.5Z" fill="#4a7ebb"/><path d="M21 17C19.5 16.5 18 18.5 18.5 20" stroke="#fff" stroke-width="1.1" fill="none"/></svg>
<svg class="ic" style="left:497px;top:66px" width="32" height="30" viewBox="0 0 32 30"><rect x="1.5" y="1.5" width="24" height="20" fill="#fff" stroke="#737373"/><rect x="7" y="6" width="18" height="15" fill="#bcd3eb"/><path d="M7.5 1.5V21.5M13.5 1.5V21.5M19.5 1.5V21.5M1.5 6.5H25.5M1.5 11.5H25.5M1.5 16.5H25.5" stroke="#737373"/><path d="M29.5 4L23.5 13" stroke="#737373" stroke-width="4.2"/><path d="M22.5 12.5C25.5 14.5 25 18.5 22 21.5C19 24.5 14.5 27 9.5 28.5C11.5 24 13.5 18.5 15.5 15.5C17.5 12.5 20 11.5 22.5 12.5Z" fill="#4a7ebb"/><path d="M21 16C19.5 15.5 18 17.5 18.5 19" stroke="#fff" stroke-width="1.1" fill="none"/></svg>
<svg class="ic" style="left:545px;top:64px" width="32" height="31" viewBox="0 0 32 31"><rect x="3.5" y="1.5" width="27" height="24" fill="#fff" stroke="#737373"/><path d="M9.5 1.5V25.5M16.5 1.5V25.5M23.5 1.5V25.5M3.5 7.5H30.5M3.5 13.5H30.5M3.5 19.5H30.5" stroke="#737373"/><rect x="17" y="2" width="6" height="5" fill="#e0603a"/><rect x="10" y="8" width="13" height="5" fill="#4a7ebb"/><rect x="14" y="14" width="9" height="5" fill="#e0603a"/><rect x="17" y="20" width="6" height="5" fill="#4a7ebb"/><rect x="1.5" y="18.5" width="15" height="11" fill="#fff" stroke="#737373"/><path d="M5.5 22.5H12.5M5.5 25.5H12.5M11 20L7 28" stroke="#444" stroke-width="1.1"/></svg>
<svg class="ic" style="left:706px;top:101px" width="18" height="18" viewBox="0 0 18 18"><rect x="1" y="1" width="16" height="9" fill="#4a7ebb"/><rect x="3" y="3" width="12" height="5" fill="#fff"/><circle cx="9" cy="5.5" r="2.2" fill="#4a7ebb"/><ellipse cx="12.5" cy="11" rx="4" ry="1.6" fill="#e7b96a"/><ellipse cx="12.5" cy="13.5" rx="4" ry="1.6" fill="#e7b96a"/><ellipse cx="7" cy="15.5" rx="4" ry="1.6" fill="#e7b96a"/></svg>
<div class="t" style="right:678px;top:103px;font-size:15px;color:#444;">%</div>
<svg class="ic" style="left:655px;top:106px" width="8" height="8" viewBox="0 0 8 8"><circle cx="4.3" cy="2.3" r="2" fill="#444"/><path d="M6 2.5C6 5 4.5 6.5 2 7.3" fill="none" stroke="#444" stroke-width="1.5"/></svg>
<svg class="ic" style="left:597px;top:102px" width="17" height="16" viewBox="0 0 17 16"><text x="16" y="7" font-size="9" font-family="Liberation Sans" fill="#444" text-anchor="end">.00</text><text x="16" y="14.5" font-size="9" font-family="Liberation Sans" fill="#444" text-anchor="end">.0</text><path d="M1 11H7.5M5 8.5L7.5 11L5 13.5" fill="none" stroke="#4a7ebb" stroke-width="1.4"/></svg>
<svg class="ic" style="left:619px;top:102px" width="17" height="16" viewBox="0 0 17 16"><text x="16" y="7" font-size="9" font-family="Liberation Sans" fill="#444" text-anchor="end">.0</text><text x="16" y="14.5" font-size="9" font-family="Liberation Sans" fill="#444" text-anchor="end">.00</text><path d="M1.5 3.5H8M4 1L1.5 3.5L4 6" fill="none" stroke="#4a7ebb" stroke-width="1.4"/></svg>
<svg class="ic" style="left:817px;top:70px" width="19" height="17" viewBox="0 0 19 17"><rect x="1.5" y="1.5" width="9.5" height="4.5" fill="#fff" stroke="#737373" stroke-width="1.2"/><path d="M3 3.8H15.5" stroke="#4a7ebb" stroke-width="1.1"/><rect x="1.5" y="8.5" width="9.5" height="7" fill="#fff" stroke="#737373" stroke-width="1.2"/><path d="M3.5 10.8H9.5M3.5 13H9.5" stroke="#4a7ebb" stroke-width="1"/><path d="M17.3 5.5C17.3 8.8 15.3 10.8 12 10.8" fill="none" stroke="#4a7ebb" stroke-width="1.3"/><path d="M14.5 8.2L11.8 10.8L14.5 13.4" fill="none" stroke="#4a7ebb" stroke-width="1.3"/></svg>
<svg class="ic" style="left:817px;top:101px" width="17" height="17" viewBox="0 0 17 17"><rect x="1.5" y="1.5" width="14" height="14" fill="#fff" stroke="#737373"/><path d="M1.5 4.5H15.5M1.5 12.5H15.5M8.5 1.5V4.5M8.5 12.5V15.5" stroke="#737373"/><path d="M3.5 8.5H13.5M5.5 6.5L3.5 8.5L5.5 10.5M11.5 6.5L13.5 8.5L11.5 10.5" fill="none" stroke="#4a7ebb" stroke-width="1"/></svg>
<svg class="ic" style="left:862px;top:74px" width="14" height="10" viewBox="0 0 14 10"><path d="M0.5 0.5L5 4.5L0.5 8.5Z" fill="#4a7ebb"/><path d="M9 1H13.5M9.5 1V9M12 1V9" stroke="#555" stroke-width="1.4"/><path d="M9.5 1C7 1 6 2.5 6 3.5C6 4.5 7 6 9.5 6Z" fill="#555"/></svg>
<svg class="ic" style="left:900px;top:68px" width="22" height="22" viewBox="0 0 22 22"><text x="8.5" y="13.5" font-size="11.5" font-family="Liberation Sans" fill="#555" text-anchor="middle" transform="rotate(-45 8.5 9.5)">ab</text><path d="M9.5 17.5L18.5 8.5" stroke="#555" stroke-width="1.3"/><path d="M14.5 8.2H18.8V12.5" fill="none" stroke="#555" stroke-width="1.3"/></svg>
<div class="a" style="left:931px;top:68px;width:22px;height:23px;background:#c5c5c5"></div>
<svg class="ic" style="left:979px;top:71px" width="16" height="10" viewBox="0 0 16 10"><path d="M0 0.5H14" stroke="#666" stroke-width="1.2"/><path d="M0 3.5H14" stroke="#666" stroke-width="1.2"/><path d="M0 6.5H14" stroke="#666" stroke-width="1.2"/></svg>
<svg class="ic" style="left:957px;top:75px" width="16" height="10" viewBox="0 0 16 10"><path d="M0 0.5H14" stroke="#666" stroke-width="1.2"/><path d="M0 3.5H14" stroke="#666" stroke-width="1.2"/><path d="M0 6.5H14" stroke="#666" stroke-width="1.2"/></svg>
<svg class="ic" style="left:935px;top:80px" width="16" height="10" viewBox="0 0 16 10"><path d="M0 0.5H14" stroke="#666" stroke-width="1.2"/><path d="M0 3.5H14" stroke="#666" stroke-width="1.2"/><path d="M0 6.5H14" stroke="#666" stroke-width="1.2"/></svg>
<svg class="ic" style="left:979px;top:105px" width="16" height="13" viewBox="0 0 16 13"><path d="M0 0.5H14" stroke="#666" stroke-width="1.2"/><path d="M4 3.5H14" stroke="#666" stroke-width="1.2"/><path d="M0 6.5H14" stroke="#666" stroke-width="1.2"/><path d="M4 9.5H14" stroke="#666" stroke-width="1.2"/></svg>
<svg class="ic" style="left:957px;top:105px" width="16" height="13" viewBox="0 0 16 13"><path d="M0 0.5H14" stroke="#666" stroke-width="1.2"/><path d="M2 3.5H12" stroke="#666" stroke-width="1.2"/><path d="M0 6.5H14" stroke="#666" stroke-width="1.2"/><path d="M2 9.5H12" stroke="#666" stroke-width="1.2"/></svg>
<svg class="ic" style="left:935px;top:105px" width="16" height="13" viewBox="0 0 16 13"><path d="M0 0.5H14" stroke="#666" stroke-width="1.2"/><path d="M0 3.5H10" stroke="#666" stroke-width="1.2"/><path d="M0 6.5H14" stroke="#666" stroke-width="1.2"/><path d="M0 9.5H10" stroke="#666" stroke-width="1.2"/></svg>
<svg class="ic" style="left:880px;top:102px" width="18" height="15" viewBox="0 0 18 15"><path d="M1 1.5H17M9 4.5H17M9 7.5H17M9 10.5H17M1 13.5H17" stroke="#666" stroke-width="1.2"/><path d="M1.5 7.5H8M4.5 4.5L1.5 7.5L4.5 10.5" fill="none" stroke="#4a7ebb" stroke-width="1.8"/></svg>
<svg class="ic" style="left:902px;top:102px" width="18" height="15" viewBox="0 0 18 15"><path d="M1 1.5H17M9 4.5H17M9 7.5H17M9 10.5H17M1 13.5H17" stroke="#666" stroke-width="1.2"/><path d="M1 7.5H7.5M4.5 4.5L7.5 7.5L4.5 10.5" fill="none" stroke="#4a7ebb" stroke-width="1.8"/></svg>
<div class="t" style="right:345px;top:77px;font-size:11px;color:#555;font-weight:bold;">A</div>
<div class="t" style="right:321px;top:74px;font-size:14px;color:#555;font-weight:bold;transform:scaleX(1.1);transform-origin:100% 50%;">A</div>
<svg class="ic" style="left:1019px;top:71px" width="7" height="5" viewBox="0 0 7 5"><path d="M0.5 0.5H6.5L3.5 3.8Z" fill="#4a7ebb"/></svg>
<svg class="ic" style="left:1041px;top:71px" width="7" height="5" viewBox="0 0 7 5"><path d="M0.5 3.8H6.5L3.5 0.5Z" fill="#4a7ebb"/></svg>
<div class="t" style="right:169px;top:104px;font-size:12px;color:#555;font-weight:bold;">B</div>
<div class="t" style="right:191px;top:104px;font-size:12px;color:#555;font-weight:bold;transform:scaleX(1.7239);transform-origin:100% 50%;font-style:italic;font-family:'Liberation Serif',serif;">I</div>
<div class="t" style="right:212px;top:104px;font-size:12px;color:#555;font-weight:bold;transform:scaleX(1.1571);transform-origin:100% 50%;">U</div>
<div class="a" style="left:1144px;top:115px;width:9px;height:1px;background:#555"></div>
<svg class="ic" style="left:1098px;top:102px" width="15" height="15" viewBox="0 0 15 15"><path d="M1 1.5H14M1 7.5H14M1.5 1V14M7.5 1V14M13.5 1V14" stroke="#888" stroke-width="1" stroke-dasharray="1 1"/><path d="M1 13.5H14" stroke="#555" stroke-width="1.2"/></svg>
<svg class="ic" style="left:1054px;top:101px" width="18" height="18" viewBox="0 0 18 18"><path d="M3 9L8 4L13 9L8 14Z" fill="#fff" stroke="#555" stroke-width="1.1"/><path d="M7.5 6V1.5H9.5V6" fill="none" stroke="#555" stroke-width="1"/><path d="M13.5 7C15.5 8 16 10 15 12L13 10Z" fill="#4a7ebb"/><rect x="1" y="13" width="16" height="4" fill="#ffff00"/></svg>
<div class="t" style="right:331px;top:103px;font-size:13px;color:#555;font-weight:bold;transform:scaleX(1.1111);transform-origin:100% 50%;">A</div>
<div class="a" style="left:1021px;top:114px;width:16px;height:4px;background:#ff0000"></div>
<svg class="ic" style="left:1301px;top:63px" width="16" height="16" viewBox="0 0 16 16"><path d="M4 1L11 10M12 1L5 10" stroke="#555" stroke-width="1.5"/><circle cx="3.5" cy="12.5" r="2.6" fill="none" stroke="#4a7ebb" stroke-width="1.3"/><circle cx="12.5" cy="12.5" r="2.6" fill="none" stroke="#4a7ebb" stroke-width="1.3"/></svg>
<svg class="ic" style="left:1300px;top:86px" width="17" height="16" viewBox="0 0 17 16"><path d="M1.5 1.5H7L9 3.5V4.5M1.5 1.5V11.5H4.5" fill="#fff" stroke="#737373"/><path d="M3 4.5H6M3 6.5H5M3 8.5H5" stroke="#4a7ebb"/><path d="M5.5 4.5H11.5L15.5 8.5V14.5H5.5Z" fill="#fff" stroke="#737373"/><path d="M11.5 4.5V8.5H15.5" fill="none" stroke="#737373"/><path d="M7.5 9.5H13M7.5 11.5H13" stroke="#4a7ebb"/></svg>
<svg class="ic" style="left:1300px;top:109px" width="18" height="16" viewBox="0 0 18 16"><path d="M10.5 6L15.5 1L17.5 3L12.5 8Z" fill="#777"/><path d="M9 5L13.5 9.5L11 12L6.5 7.5Z" fill="#777"/><path d="M6 8L10.5 12.5L8 15L1 15L1.5 13Z" fill="#e8bc72"/></svg>
<svg class="ic" style="left:1328px;top:64px" width="30" height="32" viewBox="0 0 30 32"><rect x="1" y="4" width="24" height="25" rx="2" fill="#dcdadd"/><path d="M8 4V1.5H10.5A2.5 2 0 0 1 15.5 1.5H18V4Z" fill="#bdbdbd"/><rect x="5" y="6" width="16" height="3" fill="#bdbdbd"/><path d="M15.5 12.5H24L28.5 17V30.5H15.5Z" fill="#f3eff4" stroke="#c2c2c2"/><path d="M24 12.5V17H28.5" fill="none" stroke="#c2c2c2"/></svg>
<svg class="ic" style="left:17px;top:10px" width="12" height="11" viewBox="0 0 12 11"><path d="M1 0.8L11 10.2M11 0.8L1 10.2" stroke="#fff" stroke-width="1.6"/></svg>
<svg class="ic" style="left:63px;top:10px" width="12" height="11" viewBox="0 0 12 11"><path d="M3.5 3V0.5H11.5V7.5H8.5" fill="none" stroke="#fff" stroke-width="1.1"/><rect x="0.5" y="3" width="8" height="7.5" fill="none" stroke="#fff" stroke-width="1.1"/></svg>
<svg class="ic" style="left:110px;top:15px" width="10" height="3" viewBox="0 0 10 3"><rect x="0" y="0.8" width="9.5" height="2" fill="#fff"/></svg>
<svg class="ic" style="left:153px;top:9px" width="15" height="12" viewBox="0 0 15 12"><rect x="0.6" y="0.6" width="13.6" height="10.6" fill="none" stroke="#fff" stroke-width="1.2"/><path d="M0.6 3H14.2" stroke="#fff" stroke-width="1"/><path d="M7.4 10V5M5 7.3L7.4 4.9L9.8 7.3" fill="none" stroke="#fff" stroke-width="1.1"/></svg>
<svg class="ic" style="left:51px;top:37px" width="17" height="17" viewBox="0 0 17 17"><circle cx="8" cy="4.8" r="4.4" fill="none" stroke="#fff" stroke-width="1.2"/><path d="M0.8 15.5C1.5 11 4 9.2 7 9.2C8.5 9.2 9.5 9.6 10.5 10.2" fill="none" stroke="#fff" stroke-width="1.2"/><path d="M12.5 9.5V16M9.3 12.7H15.8" stroke="#fff" stroke-width="1.3"/></svg>
<svg class="ic" style="left:1331px;top:7px" width="17" height="16" viewBox="0 0 17 16"><rect x="1" y="1" width="14" height="14" rx="0.6" fill="#fff"/><rect x="3" y="3" width="10" height="4.7" fill="#217346"/><rect x="4" y="10" width="8" height="3" fill="#217346"/><rect x="6" y="12" width="2" height="1" fill="#fff"/></svg>
<svg class="ic" style="left:1288px;top:8px" width="16" height="14" viewBox="0 0 16 14"><path d="M13.5 5H6C3 5 1.5 7 1.5 9C1.5 11 3 12.8 5.5 12.8" fill="none" stroke="#fff" stroke-width="1.7"/><path d="M10 1.3L14 5L10 8.7" fill="none" stroke="#fff" stroke-width="1.7"/></svg>
<svg class="ic" style="left:1273px;top:13px" width="7" height="4" viewBox="0 0 7 4"><path d="M0.5 0.2H6.5L3.5 3.5Z" fill="#fff"/></svg>
<svg class="ic" style="left:1244px;top:8px" width="16" height="14" viewBox="0 0 16 14"><path d="M2.5 5H10C13 5 14.5 7 14.5 9C14.5 11 13 12.8 10.5 12.8" fill="none" stroke="#72a88b" stroke-width="1.7"/><path d="M6 1.3L2 5L6 8.7" fill="none" stroke="#72a88b" stroke-width="1.7"/></svg>
<svg class="ic" style="left:1229px;top:13px" width="7" height="4" viewBox="0 0 7 4"><path d="M0.5 0.2H6.5L3.5 3.5Z" fill="#5f9a7a"/></svg>
<svg class="ic" style="left:1202px;top:11px" width="8" height="8" viewBox="0 0 8 8"><rect x="1" y="0.5" width="6" height="1.2" fill="#fff"/><path d="M0.8 3.2H7.2L4 6.8Z" fill="#fff"/></svg>
<svg class="ic" style="left:726px;top:36px" width="12" height="15" viewBox="0 0 12 15"><path d="M6 1.2C3.2 1.2 1.3 3.2 1.3 5.7C1.3 7.6 2.5 8.6 3.5 9.8V11.5H8.5V9.8C9.5 8.6 10.7 7.6 10.7 5.7C10.7 3.2 8.8 1.2 6 1.2Z" fill="none" stroke="#b9d3c4" stroke-width="1.1"/><path d="M3.8 13H8.2M4.5 14.5H7.5" stroke="#b9d3c4" stroke-width="1"/></svg>
<svg class="a" style="left:0;top:0;z-index:0" width="520" height="57"><g fill="#1f6841" opacity=".85"><path d="M125 26C125 38 133 44 150 44H268C281 44 287 38 287 28V0H150C135 2 125 12 125 26Z"/><path d="M306 24C306 10 318 2 334 2C346 2 354 8 360 14H372C386 14 396 22 396 32C396 42 386 47 374 47H330C316 47 306 38 306 24Z"/><path d="M412 20C412 8 420 0 434 0H462C474 0 481 8 481 20C481 31 474 40 462 40H434C420 40 412 32 412 20Z"/></g></svg>
<svg class="ic" style="left:87px;top:165px" width="12" height="12" viewBox="0 0 12 12"><path d="M1 3.5H10L5.5 8Z" fill="#666"/></svg>
<svg class="ic" style="left:120px;top:165px" width="5" height="13" viewBox="0 0 5 13"><circle cx="2.5" cy="1.5" r="1.1" fill="#999"/><circle cx="2.5" cy="6" r="1.1" fill="#999"/><circle cx="2.5" cy="10.5" r="1.1" fill="#999"/></svg>
<svg class="ic" style="left:149px;top:165px" width="13" height="12" viewBox="0 0 13 12"><path d="M1.5 1L11.5 11M11.5 1L1.5 11" stroke="#bdbdbd" stroke-width="1.3"/></svg>
<svg class="ic" style="left:185px;top:165px" width="15" height="12" viewBox="0 0 15 12"><path d="M1.5 6L5.5 10L13.5 1.5" fill="none" stroke="#c8c8c8" stroke-width="2"/></svg>
<div class="t" style="right:1131px;top:164px;font-size:14px;color:#555;font-weight:bold;transform:scaleX(1.0985);transform-origin:100% 50%;font-family:'Liberation Serif',serif;font-style:italic;">fx</div>
<svg class="ic" style="left:1348px;top:168px" width="10" height="7" viewBox="0 0 10 7"><path d="M1 1L5 5L9 1" fill="none" stroke="#666" stroke-width="1.8"/></svg>
<div class="t" style="right:1326px;top:164px;font-size:15px;color:#333;transform:scaleX(1.0112);transform-origin:100% 50%;">D10</div>
<svg class="ic" style="left:1340px;top:197px" width="13" height="14" viewBox="0 0 13 14"><path d="M12 1V13H1Z" fill="#b5b5b5"/></svg>
<svg class="ic" style="left:447px;top:736px" width="24" height="24" viewBox="0 0 24 24"><rect x="11" y="3.5" width="10" height="16" fill="#fff"/><path d="M13 6.5H21M13 9.5H21M13 12.5H21M13 15.5H21M16.5 4V19" stroke="#1d7044" stroke-width="1"/><path d="M0 3.5L13 1V23L0 20.5Z" fill="#1d7044"/><text x="6.5" y="16" font-size="10" font-weight="bold" font-family="Liberation Sans" fill="#fff" text-anchor="middle">X</text></svg>
<svg class="ic" style="left:496px;top:736px" width="24" height="24" viewBox="0 0 24 24"><rect x="11" y="3.5" width="10" height="16" fill="#fff"/><path d="M13 6.5H20M13 9.5H20M13 12.5H20M13 15.5H20" stroke="#2b579a" stroke-width="1.2"/><path d="M0 3.5L13 1V23L0 20.5Z" fill="#2b579a"/><text x="6.5" y="16" font-size="10" font-weight="bold" font-family="Liberation Sans" fill="#fff" text-anchor="middle">W</text></svg>
<svg class="ic" style="left:643px;top:736px" width="24" height="24" viewBox="0 0 24 24"><rect x="11" y="3.5" width="10" height="16" fill="#fff"/><rect x="10.5" y="3" width="11.5" height="17" rx="2.5" fill="#fff"/><path d="M11 7.5Q16.5 9.5 22 7.5M11 11.5Q16.5 13.5 22 11.5M11 15.5Q16.5 17.5 22 15.5" fill="none" stroke="#a4373a" stroke-width="1.4"/><path d="M0 3.5L13 1V23L0 20.5Z" fill="#a4373a"/><text x="6.5" y="16" font-size="10" font-weight="bold" font-family="Liberation Sans" fill="#fff" text-anchor="middle">A</text></svg>
<svg class="ic" style="left:790px;top:736px" width="24" height="24" viewBox="0 0 24 24"><rect x="11" y="3.5" width="10" height="16" fill="#fff"/><circle cx="17" cy="8" r="3" fill="#d24726"/><path d="M13 13.5H20M13 16H20" stroke="#d24726" stroke-width="1.2"/><path d="M0 3.5L13 1V23L0 20.5Z" fill="#d24726"/><text x="6.5" y="16" font-size="10" font-weight="bold" font-family="Liberation Sans" fill="#fff" text-anchor="middle">P</text></svg>
<svg class="ic" style="left:839px;top:736px" width="24" height="24" viewBox="0 0 24 24"><rect x="11" y="3.5" width="10" height="16" fill="#fff"/><rect x="16" y="1.5" width="7" height="16" fill="#fff"/><rect x="11" y="3.5" width="9" height="16" fill="#fff" stroke="#077568" stroke-width="0.8"/><path d="M13 8H19M13 11H19M13 14H19" stroke="#077568" stroke-width="1.2"/><path d="M0 3.5L13 1V23L0 20.5Z" fill="#077568"/><text x="6.5" y="16" font-size="10" font-weight="bold" font-family="Liberation Sans" fill="#fff" text-anchor="middle">P</text></svg>
<svg class="ic" style="left:543px;top:735px" width="26" height="26" viewBox="0 0 26 26"><defs><linearGradient id="eg1" x1="0" y1="0" x2="1" y2="1"><stop offset="0" stop-color="#1b9de2"/><stop offset="1" stop-color="#50e08f"/></linearGradient><linearGradient id="eg2" x1="0" y1="0" x2="0" y2="1"><stop offset="0" stop-color="#0c59a4"/><stop offset="1" stop-color="#1e8fe0"/></linearGradient></defs><circle cx="13" cy="13" r="12.3" fill="url(#eg1)"/><path d="M1 12C2 6 8 4.5 12 7C7 8 5 12 7 17C9 21 15 23 20 21.5C17 24.5 12 25.5 8 24C3 22 0.5 17 1 12Z" fill="url(#eg2)"/><path d="M7 16C6.5 11 10 8.5 13.5 9C16.5 9.5 18 11.5 17.5 14H9.5C10 17 13 18.5 16 18C19 17.5 22 16 24 14C23.5 17 21 20.5 17 21.5C12 23 7.5 20.5 7 16Z" fill="#1a73c9"/><circle cx="14.5" cy="14.5" r="3.5" fill="#1f1f1f"/></svg>
<svg class="ic" style="left:593px;top:736px" width="24" height="24" viewBox="0 0 24 24"><circle cx="12" cy="12" r="11" fill="#2b2b2b" stroke="#d8d8d8" stroke-width="1.3"/><g fill="none" stroke="#bdbdbd" stroke-width="1.6" stroke-linecap="round"><path d="M12 12C9 10 8.5 6 11 4.3C12.5 3.4 14.5 3.8 15 5"/><path d="M12 12C9 10 8.5 6 11 4.3C12.5 3.4 14.5 3.8 15 5" transform="rotate(120 12 12)"/><path d="M12 12C9 10 8.5 6 11 4.3C12.5 3.4 14.5 3.8 15 5" transform="rotate(240 12 12)"/></g><circle cx="12" cy="12" r="1.5" fill="#2b2b2b"/></svg>
<svg class="ic" style="left:690px;top:735px" width="26" height="26" viewBox="0 0 26 26"><circle cx="13" cy="13" r="12" fill="#db4437"/><path d="M13 13L2.6 7A12 12 0 0 0 13 25Z" fill="#0f9d58"/><path d="M13 13H25A12 12 0 0 1 13 25Z" fill="#f4b400"/><path d="M13 13L2.6 7A12 12 0 0 1 7 3Z" fill="#db4437"/><circle cx="13" cy="13" r="5.5" fill="#fff"/><circle cx="13" cy="13" r="4.3" fill="#4285f4"/></svg>
<svg class="ic" style="left:741px;top:738px" width="22" height="19" viewBox="0 0 22 19"><path d="M0.5 1.5H8L10 3.5H21.5V18.5H0.5Z" fill="#f6c648"/><path d="M0.5 1H8L9.5 2.5H0.5Z" fill="#dca424"/><rect x="0.5" y="4.5" width="21" height="14" fill="#fcd46a"/><path d="M4 10H18V18.5H15V13H7V18.5H4Z" fill="#3d8fe0"/></svg>
<svg class="ic" style="left:886px;top:736px" width="26" height="23" viewBox="0 0 26 23"><defs><linearGradient id="cg1" x1="0" y1="0" x2="0" y2="1"><stop offset="0" stop-color="#1a9cf2"/><stop offset=".55" stop-color="#7bd35a"/><stop offset="1" stop-color="#f7c51e"/></linearGradient><linearGradient id="cg2" x1="0" y1="0" x2="0" y2="1"><stop offset="0" stop-color="#a35cf5"/><stop offset=".55" stop-color="#f26aa0"/><stop offset="1" stop-color="#f9a23f"/></linearGradient><linearGradient id="cg3" x1="0" y1="0" x2="1" y2="0"><stop offset="0" stop-color="#2466e0"/><stop offset="1" stop-color="#3a7bf0"/></linearGradient></defs><path d="M9 1H17C18.5 1 19 2.3 18.4 3.6L16 9H11.5C10.5 9 9.7 9.6 9.3 10.5L6.5 17C6 18.3 5 19 3.5 19H2.5C1 19 0.3 17.8 0.8 16.4L5.8 3.2C6.4 1.8 7.5 1 9 1Z" fill="url(#cg1)"/><path d="M17 22H9C7.5 22 7 20.7 7.6 19.4L10 14H14.5C15.5 14 16.3 13.4 16.7 12.5L19.5 6C20 4.7 21 4 22.5 4H23.5C25 4 25.7 5.2 25.2 6.6L20.2 19.8C19.6 21.2 18.5 22 17 22Z" fill="url(#cg2)"/><path d="M14 1H17C18.5 1 19 2.3 18.4 3.6L17.5 6C17 4.5 15.5 3 14 1Z" fill="url(#cg3)"/></svg>
<svg class="ic" style="left:941px;top:739px" width="18" height="17" viewBox="0 0 18 17"><rect x="0.5" y="5" width="2" height="2.5" fill="#fff"/><path d="M1.5 1V4M1.5 8.5V16M5.5 1V3.5H16.5V1M5.5 16V13.5H16.5V16" fill="none" stroke="#fff" stroke-width="1.1"/><rect x="5.5" y="5.5" width="11" height="6" fill="none" stroke="#fff" stroke-width="1.1"/></svg>
<svg class="ic" style="left:1289px;top:740px" width="18" height="17" viewBox="0 0 18 17"><circle cx="10.5" cy="6.5" r="5.5" fill="none" stroke="#333" stroke-width="1.3"/><path d="M6.5 10.5L1 16" stroke="#333" stroke-width="1.5"/></svg>
<svg class="ic" style="left:1333px;top:739px" width="18" height="17" viewBox="0 0 18 17"><path d="M0.5 2.5L7.5 1.5V8H0.5ZM8.5 1.3L17.5 0V8H8.5ZM0.5 9H7.5V15.5L0.5 14.5ZM8.5 9H17.5V17L8.5 15.7Z" fill="#fff"/></svg>
<svg class="ic" style="left:162px;top:741px" width="16" height="14" viewBox="0 0 16 14"><path d="M1 4.5H4L8 1V13L4 9.5H1Z" fill="none" stroke="#fff" stroke-width="1.1"/><path d="M10.5 5L14.5 9M14.5 5L10.5 9" stroke="#fff" stroke-width="1.1"/></svg>
<svg class="ic" style="left:189px;top:742px" width="15" height="14" viewBox="0 0 15 14"><path d="M1 13A12 12 0 0 1 13 1M4 13A9 9 0 0 1 13 4M7 13A6 6 0 0 1 13 7" fill="none" stroke="#fff" stroke-width="1.1"/><circle cx="12" cy="12" r="1.6" fill="#fff"/></svg>
<svg class="ic" style="left:211px;top:743px" width="17" height="11" viewBox="0 0 17 11"><rect x="0.6" y="0.6" width="13.8" height="9" fill="none" stroke="#fff" stroke-width="1.2"/><rect x="2.5" y="2.5" width="10" height="5.2" fill="#fff"/><rect x="15" y="3" width="1.5" height="4" fill="#fff"/></svg>
<svg class="ic" style="left:236px;top:743px" width="14" height="9" viewBox="0 0 14 9"><path d="M1 7.5L7 1.5L13 7.5" fill="none" stroke="#fff" stroke-width="1.2"/></svg>
<svg class="ic" style="left:274px;top:739px" width="26" height="18" viewBox="0 0 26 18"><path d="M1.5 2H21.5V16.5H3.5C2.3 16.5 1.5 15.7 1.5 14.5Z" fill="none" stroke="#fff" stroke-width="1.3"/><path d="M21.5 4H24.5V14.5C24.5 15.7 23.7 16.5 22.5 16.5" fill="none" stroke="#fff" stroke-width="1.3"/><rect x="4.5" y="6.5" width="5.5" height="6" fill="none" stroke="#fff" stroke-width="1.3"/><path d="M12 6.5H19M12 9.5H19M12 12.5H19M4 4.2H19" stroke="#fff" stroke-width="1.1"/></svg>
<svg class="ic" style="left:22px;top:738px" width="22" height="22" viewBox="0 0 22 22"><path d="M2.5 2H19V14.5H10L6 18V14.5H2.5Z" fill="#fff"/><path d="M5.5 5.5H16M5.5 8H16M5.5 10.5H13" stroke="#1f1f20" stroke-width="1.1"/></svg>
<svg class="ic" style="left:16px;top:747px" width="19" height="19" viewBox="0 0 19 19"><circle cx="9.5" cy="9.5" r="8" fill="#1f1f20" stroke="#777" stroke-width="1.3"/></svg>
<div class="t" style="right:1336px;top:751px;font-size:12px;color:#fff;font-weight:bold;transform:scaleX(1.2857);transform-origin:100% 50%;">4</div>
<div class="t r" style="right:1020px;top:653px;font-size:20px;color:rgba(115,115,115,.5);transform:scaleX(1.0242);transform-origin:100% 50%;">הפעל את Windows</div>
<div class="t r" style="right:1022px;top:677px;font-size:16px;color:rgba(115,115,115,.5);transform:scaleX(0.942);transform-origin:100% 50%;">עבור אל 'הגדרות' כדי להפעיל את Windows.</div>
</body></html>
